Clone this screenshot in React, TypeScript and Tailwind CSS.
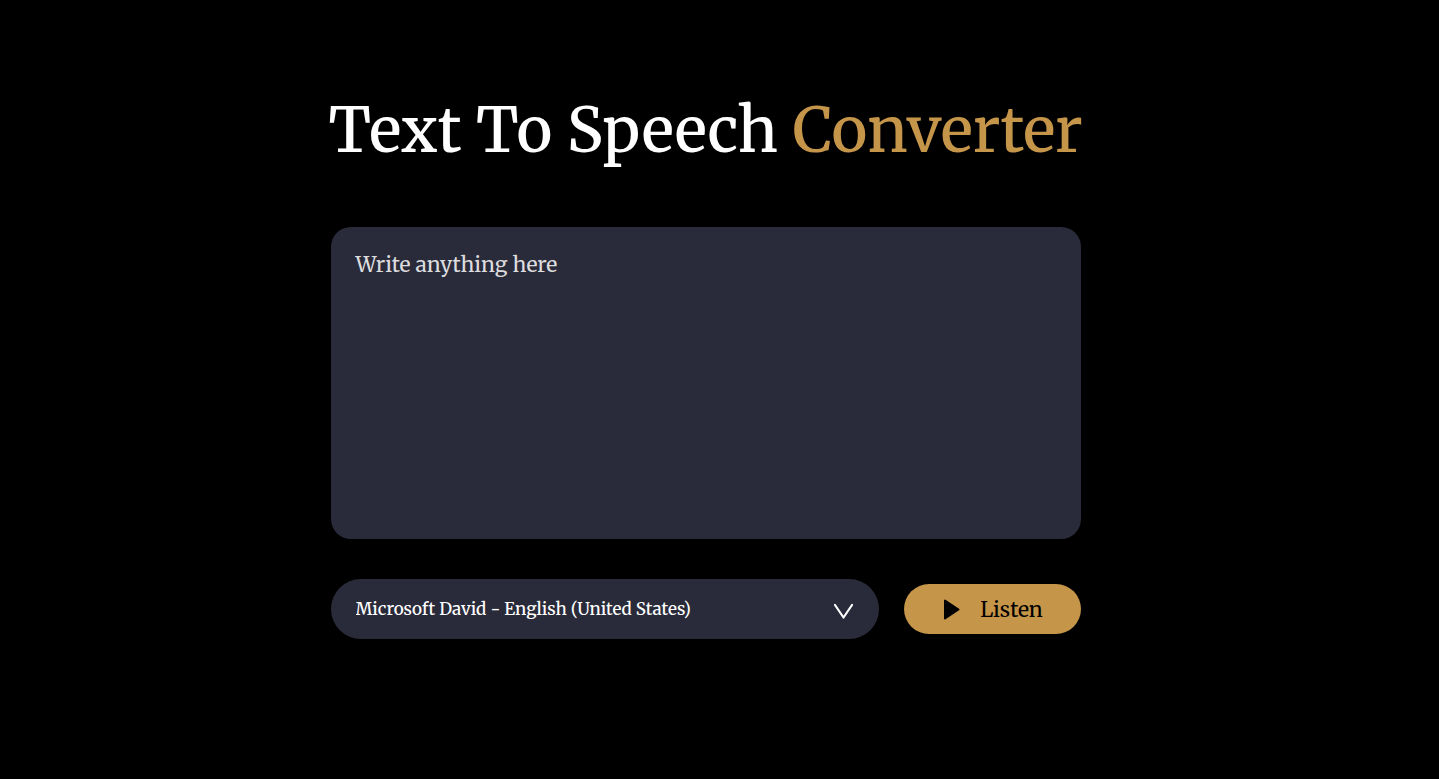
import { useState } from "react";

const voices = [
  "Microsoft David - English (United States)",
  "Microsoft Mark - English (United States)",
  "Microsoft Zira - English (United States)",
];

export default function App() {
  const [text, setText] = useState("");
  const [voice, setVoice] = useState(voices[0]);

  const speak = () => {
    const utterance = new SpeechSynthesisUtterance(text);
    const match = window.speechSynthesis
      .getVoices()
      .find((item) => item.name === voice);
    if (match) utterance.voice = match;
    window.speechSynthesis.speak(utterance);
  };

  return (
    <main className="flex min-h-screen flex-col items-center bg-black pt-[91px] pr-7 pb-10 font-['Merriweather','DejaVu_Serif_Condensed','DejaVu_Serif',serif] text-white">
      <h1 className="text-center text-[61px] leading-20 font-medium whitespace-nowrap">
        Text To Speech <span className="text-[#c59549]">Converter</span>
      </h1>
      <div className="mt-14 flex w-full max-w-[750px] flex-col gap-10">
        <textarea
          aria-label="Text to speak"
          placeholder="Write anything here"
          value={text}
          onChange={(event) => setText(event.target.value)}
          className="block h-[312px] w-full resize-none rounded-[20px] bg-[#2a2b3a] px-[25px] py-5 text-[21px] leading-9 outline-none placeholder:text-[#dddddf]"
        />
        <div className="flex items-center gap-[25px]">
          <div className="relative min-w-0 flex-1">
            <select
              aria-label="Voice"
              value={voice}
              onChange={(event) => setVoice(event.target.value)}
              className="block h-[60px] w-full appearance-none rounded-full bg-[#2a2b3a] pt-0.5 pr-16 pl-[25px] text-[17px] font-medium outline-none"
            >
              {voices.map((name) => (
                <option key={name}>{name}</option>
              ))}
            </select>
            <svg
              aria-hidden="true"
              viewBox="0 0 20 16"
              className="pointer-events-none absolute top-6 right-[25px] h-4 w-5 fill-none stroke-white"
            >
              <path d="M1 2 L9.5 14.5 L18 2" strokeWidth="2.2" strokeLinecap="round" strokeLinejoin="round" />
            </svg>
          </div>
          <button
            type="button"
            onClick={speak}
            className="flex h-[50px] w-[177px] items-center justify-center gap-[22px] rounded-full bg-[#c59549] pt-0.5 text-[21px] text-black"
          >
            <svg aria-hidden="true" viewBox="0 0 17 22" className="h-[22px] w-[17px] overflow-visible">
              <path d="M4 1.5 L4 19.5 L17.5 10.5 Z" fill="currentColor" stroke="currentColor" strokeWidth="2" strokeLinejoin="round" />
            </svg>
            Listen
          </button>
        </div>
      </div>
    </main>
  );
}
